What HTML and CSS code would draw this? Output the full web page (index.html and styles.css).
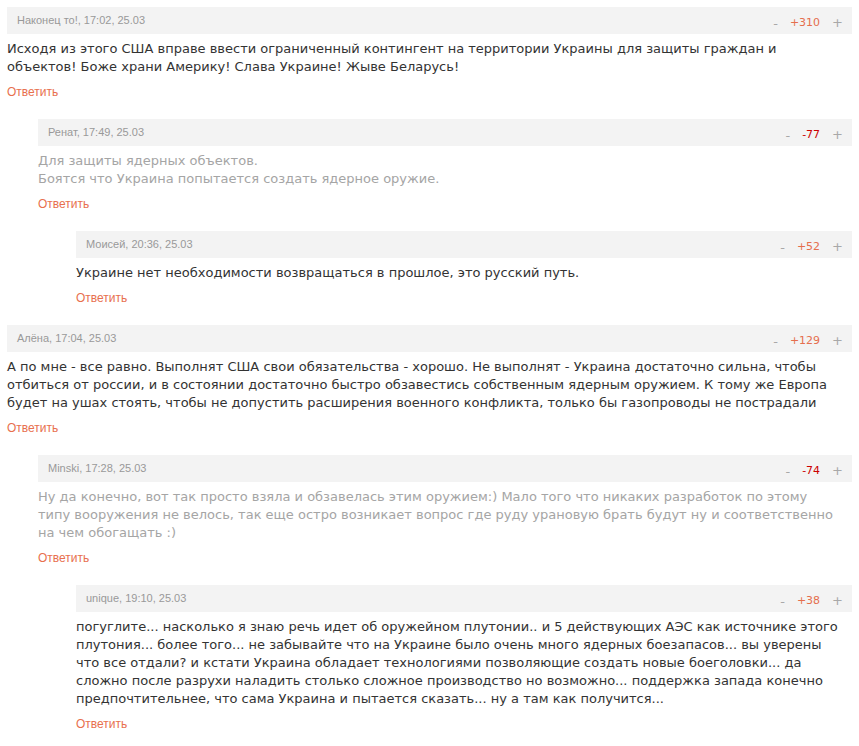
FILE: index.html
```html
<!DOCTYPE html>
<html lang="ru">

<head>
  <meta charset="UTF-8">
  <title>Комментарии</title>
  <link rel="stylesheet" href="styles.css">
</head>

<body>
  <div class="comments">

    <div class="comment">
      <div class="comment-head">
        <span class="author">Наконец то!, 17:02, 25.03</span>
        <div class="vote"><span class="minus">-</span><span class="score good">+310</span><span class="plus">+</span></div>
      </div>
      <div class="comment-body">Исходя из этого США вправе ввести ограниченный контингент на территории Украины для защиты граждан и<br>объектов! Боже храни Америку! Слава Украине! Жыве Беларусь!</div>
      <a class="reply" href="#">Ответить</a>

      <div class="comment level-2 hidden-text">
        <div class="comment-head">
          <span class="author">Ренат, 17:49, 25.03</span>
          <div class="vote"><span class="minus">-</span><span class="score bad">-77</span><span class="plus">+</span></div>
        </div>
        <div class="comment-body">Для защиты ядерных объектов.<br>Боятся что Украина попытается создать ядерное оружие.</div>
        <a class="reply" href="#">Ответить</a>

        <div class="comment level-3">
          <div class="comment-head">
            <span class="author">Моисей, 20:36, 25.03</span>
            <div class="vote"><span class="minus">-</span><span class="score good">+52</span><span class="plus">+</span></div>
          </div>
          <div class="comment-body">Украине нет необходимости возвращаться в прошлое, это русский путь.</div>
          <a class="reply" href="#">Ответить</a>
        </div>
      </div>
    </div>

    <div class="comment">
      <div class="comment-head">
        <span class="author">Алёна, 17:04, 25.03</span>
        <div class="vote"><span class="minus">-</span><span class="score good">+129</span><span class="plus">+</span></div>
      </div>
      <div class="comment-body">А по мне - все равно. Выполнят США свои обязательства - хорошо. Не выполнят - Украина достаточно сильна, чтобы<br>отбиться от россии, и в состоянии достаточно быстро обзавестись собственным ядерным оружием. К тому же Европа<br>будет на ушах стоять, чтобы не допустить расширения военного конфликта, только бы газопроводы не пострадали</div>
      <a class="reply" href="#">Ответить</a>

      <div class="comment level-2 hidden-text">
        <div class="comment-head">
          <span class="author">Minski, 17:28, 25.03</span>
          <div class="vote"><span class="minus">-</span><span class="score bad">-74</span><span class="plus">+</span></div>
        </div>
        <div class="comment-body">Ну да конечно, вот так просто взяла и обзавелась этим оружием:) Мало того что никаких разработок по этому<br>типу вооружения не велось, так еще остро возникает вопрос где руду урановую брать будут ну и соответственно<br>на чем обогащать :)</div>
        <a class="reply" href="#">Ответить</a>

        <div class="comment level-3">
          <div class="comment-head">
            <span class="author">unique, 19:10, 25.03</span>
            <div class="vote"><span class="minus">-</span><span class="score good">+38</span><span class="plus">+</span></div>
          </div>
          <div class="comment-body">погуглите... насколько я знаю речь идет об оружейном плутонии.. и 5 действующих АЭС как источнике этого<br>плутония... более того... не забывайте что на Украине было очень много ядерных боезапасов... вы уверены<br>что все отдали? и кстати Украина обладает технологиями позволяющие создать новые боеголовки... да<br>сложно после разрухи наладить столько сложное производство но возможно... поддержка запада конечно<br>предпочтительнее, что сама Украина и пытается сказать... ну а там как получится...</div>
          <a class="reply" href="#">Ответить</a>
        </div>
      </div>
    </div>

  </div>
</body>

</html>
```

FILE: styles.css
```css
body {
  margin: 0;
  padding: 7px 7px 0 7px;
  background-color: #fff;
  font-family: "DejaVu Sans", Verdana, sans-serif;
  color: #333;
}

.comments {
  width: 845px;
}

.comment-head {
  display: flex;
  justify-content: space-between;
  align-items: center;
  height: 27px;
  padding: 0 9px 0 10px;
  background-color: #f3f3f3;
}

.author {
  font-family: "Liberation Sans", Arial, sans-serif;
  font-size: 11px;
  color: #999;
  padding-bottom: 1px;
}

.vote {
  display: flex;
  align-items: center;
  padding-top: 4px;
  font-size: 11px;
}

.minus,
.plus {
  color: #a8a8a8;
  font-size: 13px;
}

.minus {
  padding-top: 1px;
}

.score {
  margin: 0 12px;
}

.score.good {
  color: #e56e4d;
}

.score.bad {
  color: #c00;
}

.comment-body {
  margin-top: 6px;
  font-size: 13px;
  line-height: 18px;
  color: #333;
  white-space: nowrap;
}

.hidden-text > .comment-body {
  color: #a5a5a5;
}

.reply {
  display: block;
  margin-top: 9px;
  margin-bottom: 20px;
  font-family: "Liberation Sans", Arial, sans-serif;
  font-size: 12px;
  line-height: 14px;
  color: #e8704e;
  text-decoration: none;
}

.level-2 {
  margin-left: 31px;
}

.level-3 {
  margin-left: 38px;
}
```
